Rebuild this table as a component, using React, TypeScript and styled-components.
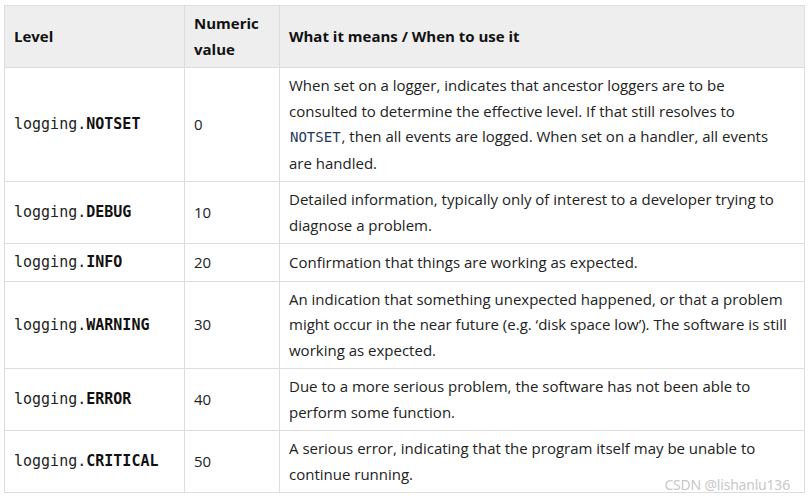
import styled, { createGlobalStyle } from 'styled-components';

const GlobalStyle = createGlobalStyle`
  html, body {
    margin: 0;
    padding: 0;
    background: #ffffff;
  }
`;

const Page = styled.div`
  position: relative;
  width: 812px;
  height: 500px;
  padding: 5px 0 0 4px;
  box-sizing: border-box;
  font-family: 'Open Sans', 'Noto Sans', sans-serif;
  font-size: 15px;
  color: #222222;
`;

const Table = styled.table`
  width: 800px;
  border-collapse: collapse;
  table-layout: fixed;
`;

const HeadCell = styled.th<{ $width: number }>`
  box-sizing: border-box;
  width: ${(p) => p.$width}px;
  background: #eeeeee;
  border: 1px solid #dddddd;
  padding: 5px 9px;
  text-align: left;
  font-weight: 700;
  line-height: 25.5px;
  color: #111111;
`;

const Cell = styled.td`
  box-sizing: border-box;
  border: 1px solid #dddddd;
  padding: 5px 12px 5px 9px;
  line-height: 25.5px;
  vertical-align: middle;
`;

const Code = styled.code`
  font-family: 'DejaVu Sans Mono', 'Liberation Mono', monospace;
  font-size: 15px;
  color: #222222;
`;

const Name = styled.span`
  font-weight: 700;
  color: #111111;
`;

const InlineCode = styled.code`
  font-family: 'DejaVu Sans Mono', 'Liberation Mono', monospace;
  font-size: 14px;
  padding: 0 1px;
  color: #1f3a5a;
`;

const Watermark = styled.div`
  position: absolute;
  right: 22px;
  bottom: 6px;
  font-family: 'Noto Sans', sans-serif;
  font-size: 14px;
  color: #c8c8c8;
  letter-spacing: -0.2px;
`;

type Row = { name: string; value: string; text: React.ReactNode };

const rows: Row[] = [
  {
    name: 'NOTSET',
    value: '0',
    text: (
      <>
        When set on a logger, indicates that ancestor loggers are to be consulted to determine the effective level. If
        that still resolves to <InlineCode>NOTSET</InlineCode>, then all events are logged. When set on a handler, all
        events are handled.
      </>
    ),
  },
  {
    name: 'DEBUG',
    value: '10',
    text: 'Detailed information, typically only of interest to a developer trying to diagnose a problem.',
  },
  { name: 'INFO', value: '20', text: 'Confirmation that things are working as expected.' },
  {
    name: 'WARNING',
    value: '30',
    text: 'An indication that something unexpected happened, or that a problem might occur in the near future (e.g. \u2018disk space low\u2019). The software is still working as expected.',
  },
  {
    name: 'ERROR',
    value: '40',
    text: 'Due to a more serious problem, the software has not been able to perform some function.',
  },
  {
    name: 'CRITICAL',
    value: '50',
    text: 'A serious error, indicating that the program itself may be unable to continue running.',
  },
];

export default function App() {
  return (
    <Page>
      <GlobalStyle />
      <Table>
        <thead>
          <tr>
            <HeadCell $width={180}>Level</HeadCell>
            <HeadCell $width={95}>Numeric value</HeadCell>
            <HeadCell $width={525}>What it means / When to use it</HeadCell>
          </tr>
        </thead>
        <tbody>
          {rows.map((r) => (
            <tr key={r.name}>
              <Cell>
                <Code>
                  logging.<Name>{r.name}</Name>
                </Code>
              </Cell>
              <Cell>{r.value}</Cell>
              <Cell>{r.text}</Cell>
            </tr>
          ))}
        </tbody>
      </Table>
      <Watermark>CSDN @lishanlu136</Watermark>
    </Page>
  );
}
